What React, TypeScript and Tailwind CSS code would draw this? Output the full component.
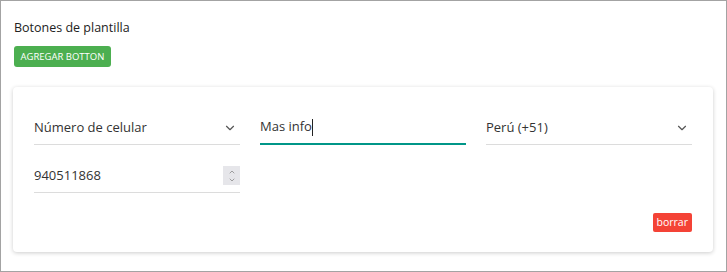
import { ChevronDown, ChevronUp } from "lucide-react"

function SelectField({ label }: { label: string }) {
  return (
    <div className="h-[34px] flex items-center justify-between border-b border-[#dcdcdc] text-[13px] text-[#333]">
      <span>{label}</span>
      <ChevronDown className="w-[14px] h-[14px] mr-[3px] text-[#555]" strokeWidth={2} />
    </div>
  )
}

export default function App() {
  return (
    <div
      className="w-[727px] h-[272px] border border-[#a3a3a3] bg-white pl-[12px] pr-[13px] pt-[17px]"
      style={{ fontFamily: '"Open Sans", "Noto Sans", sans-serif' }}
    >
      <div className="text-[12.5px] text-[#222] leading-[20px] pl-[1px]">Botones de plantilla</div>
      <button className="mt-[8px] ml-[1px] h-[21px] px-[6.5px] rounded-[3px] bg-[#4caf50] text-white text-[9.5px] leading-none">
        AGREGAR BOTTON
      </button>
      <div className="mt-[20px] bg-white rounded-[4px] shadow-[0_1px_4px_rgba(0,0,0,0.2)] px-[21px] pt-[24px] pb-[20px]">
        <div className="grid grid-cols-3 gap-x-[20px] gap-y-[14px]">
          <SelectField label="Número de celular" />
          <div className="h-[34px] flex items-center border-b-2 border-[#009688] text-[13px] text-[#333]">
            <span>Mas info</span>
            <span className="w-px h-[17px] bg-[#222]" />
          </div>
          <SelectField label="Perú (+51)" />
          <div className="h-[34px] flex items-center justify-between border-b border-[#dcdcdc] text-[13px] text-[#333]">
            <span>940511868</span>
            <div className="w-[17px] h-[19px] bg-[#e6e6ea] flex flex-col items-center justify-center">
              <ChevronUp className="w-[10px] h-[8px] text-[#777]" strokeWidth={2} />
              <ChevronDown className="w-[10px] h-[8px] text-[#777]" strokeWidth={2} />
            </div>
          </div>
        </div>
        <div className="flex justify-end mt-[20px]">
          <button className="h-[19px] px-[4px] rounded-[2px] bg-[#f44336] text-white text-[10.5px] leading-none">
            borrar
          </button>
        </div>
      </div>
    </div>
  )
}
